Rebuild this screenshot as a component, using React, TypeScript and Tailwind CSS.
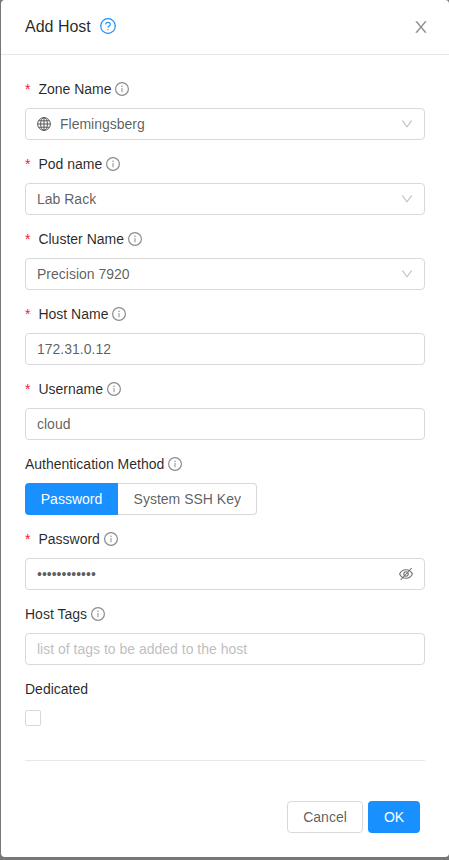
import type { ReactNode } from "react";

function InfoIcon() {
  return (
    <svg className="ml-[3.7px] size-3.5 shrink-0" viewBox="0 0 14 14" fill="none" stroke="#8c8c8c" strokeWidth="1.200">
      <circle cx="7" cy="7" r="6.400" />
      <path d="M7 6v4.300" strokeWidth="1" />
      <circle cx="7" cy="4.200" r=".75" fill="#8c8c8c" stroke="none" />
    </svg>
  );
}

function QuestionIcon() {
  return (
    <svg className="ml-[9px] size-4 -translate-y-px" viewBox="0 0 16 16" fill="none" stroke="#1890ff" strokeWidth="1.200">
      <circle cx="8" cy="8" r="7.300" />
      <path d="M5.700 6.500C5.700 5.200 6.700 4.300 8 4.300s2.300.9 2.300 2.100c0 1.500-2.300 1.700-2.300 3.300" strokeWidth="1.100" />
      <circle cx="8" cy="11.600" r=".7" fill="#1890ff" stroke="none" />
    </svg>
  );
}

function Label({ text, required, info = true }: { text: string; required?: boolean; info?: boolean }) {
  return (
    <div className="flex h-5 items-center text-black/85">
      {required && <span className="w-[13.4px] shrink-0 text-[#f5222d]">*</span>}
      <span>{text}</span>
      {info && <InfoIcon />}
    </div>
  );
}

function Field({ label, required, children }: { label: string; required?: boolean; children: ReactNode }) {
  return (
    <div className="mb-3.5">
      <Label text={label} required={required} />
      <div className="mt-[9px]">{children}</div>
    </div>
  );
}

function Box({ children, end }: { children: ReactNode; end?: ReactNode }) {
  return (
    <div className="flex h-8 items-center justify-between rounded border border-[#d9d9d9] px-[11px] text-black/65">
      <div className="flex items-center">{children}</div>
      {end}
    </div>
  );
}

function Chevron() {
  return (
    <svg className="-mr-px size-3.5" viewBox="0 0 1024 1024" fill="#bfbfbf">
      <path d="M884 256h-75c-5.100 0-9.900 2.500-12.900 6.600L512 654.200 227.900 262.600c-3-4.100-7.800-6.600-12.900-6.600h-75c-6.500 0-10.300 7.400-6.500 12.700l352.600 486.100c12.800 17.600 39 17.600 51.700 0l352.600-486.100c3.900-5.300.1-12.700-6.400-12.700z" />
    </svg>
  );
}

function CloseIcon() {
  return (
    <svg className="-mr-0.5 size-[18px]" viewBox="0 0 1024 1024" fill="#8c8c8c">
      <path d="M563.800 512l262.500-312.900c4.400-5.200.7-13.100-6.100-13.100h-79.800c-4.700 0-9.200 2.100-12.300 5.700L511.600 449.800 295.100 191.700c-3-3.600-7.500-5.700-12.300-5.700H203c-6.800 0-10.500 7.900-6.100 13.100L459.400 512 196.900 824.900A7.950 7.950 0 0 0 203 838h79.800c4.700 0 9.200-2.100 12.300-5.700l216.500-258.100 216.500 258.100c3 3.600 7.500 5.700 12.300 5.700h79.800c6.800 0 10.500-7.900 6.100-13.100L563.800 512z" />
    </svg>
  );
}

function Globe() {
  return (
    <svg className="mr-[9px] size-3.5" viewBox="0 0 14 14" fill="none" stroke="#595959" strokeWidth="1">
      <circle cx="7" cy="7" r="6.400" />
      <ellipse cx="7" cy="7" rx="3.400" ry="6.400" />
      <path d="M7 .6v12.800M.6 7h12.800M1.600 3.800h10.800M1.600 10.200h10.800" />
    </svg>
  );
}

function EyeOff() {
  return (
    <svg className="size-3.5" viewBox="0 0 14 14" fill="none" stroke="#707070" strokeWidth="1.100">
      <path d="M.6 7C2 4 4.200 2.700 7 2.700S12 4 13.400 7C12 10 9.800 11.300 7 11.300S2 10 .6 7Z" />
      <circle cx="7" cy="7" r="2.200" />
      <path d="M12.700 1 1.600 13" />
    </svg>
  );
}

export default function App() {
  return (
    <div className="h-[860px] w-[449px] bg-[#777] pl-px font-['Liberation_Sans',Arial,sans-serif] text-sm leading-5">
      <div className="h-[857px] rounded bg-white">
        <header className="flex h-[55px] items-center justify-between border-b border-[#e8e8e8] pr-[21px] pl-6">
          <div className="flex items-center text-base text-black/85">
            <span>Add Host</span>
            <QuestionIcon />
          </div>
          <CloseIcon />
        </header>
        <main className="px-6 pt-6">
          <Field label="Zone Name" required>
            <Box end={<Chevron />}>
              <Globe />
              Flemingsberg
            </Box>
          </Field>
          <Field label="Pod name" required>
            <Box end={<Chevron />}>Lab Rack</Box>
          </Field>
          <Field label="Cluster Name" required>
            <Box end={<Chevron />}>Precision 7920</Box>
          </Field>
          <Field label="Host Name" required>
            <Box>172.31.0.12</Box>
          </Field>
          <Field label="Username" required>
            <Box>cloud</Box>
          </Field>
          <Field label="Authentication Method">
            <div className="flex h-8">
              <button className="w-[93px] rounded-l bg-[#1890ff] text-white">Password</button>
              <button className="w-[139px] rounded-r border border-l-0 border-[#d9d9d9] pl-[0.5px] text-black/65">System SSH Key</button>
            </div>
          </Field>
          <Field label="Password" required>
            <Box end={<EyeOff />}>••••••••••••</Box>
          </Field>
          <Field label="Host Tags">
            <Box>
              <span className="text-[#bfbfbf]">list of tags to be added to the host</span>
            </Box>
          </Field>
          <Label text="Dedicated" info={false} />
          <div className="mt-[11px] size-4 rounded-[2px] border border-[#d9d9d9]" />
          <div className="mt-[34px] border-t border-[#e8e8e8]" />
          <div className="mt-10 flex justify-end gap-[5px] pr-[5px]">
            <button className="h-8 w-[76px] rounded border border-[#d9d9d9] text-black/65">Cancel</button>
            <button className="h-8 w-[52px] rounded bg-[#1890ff] text-white">OK</button>
          </div>
        </main>
      </div>
    </div>
  );
}
